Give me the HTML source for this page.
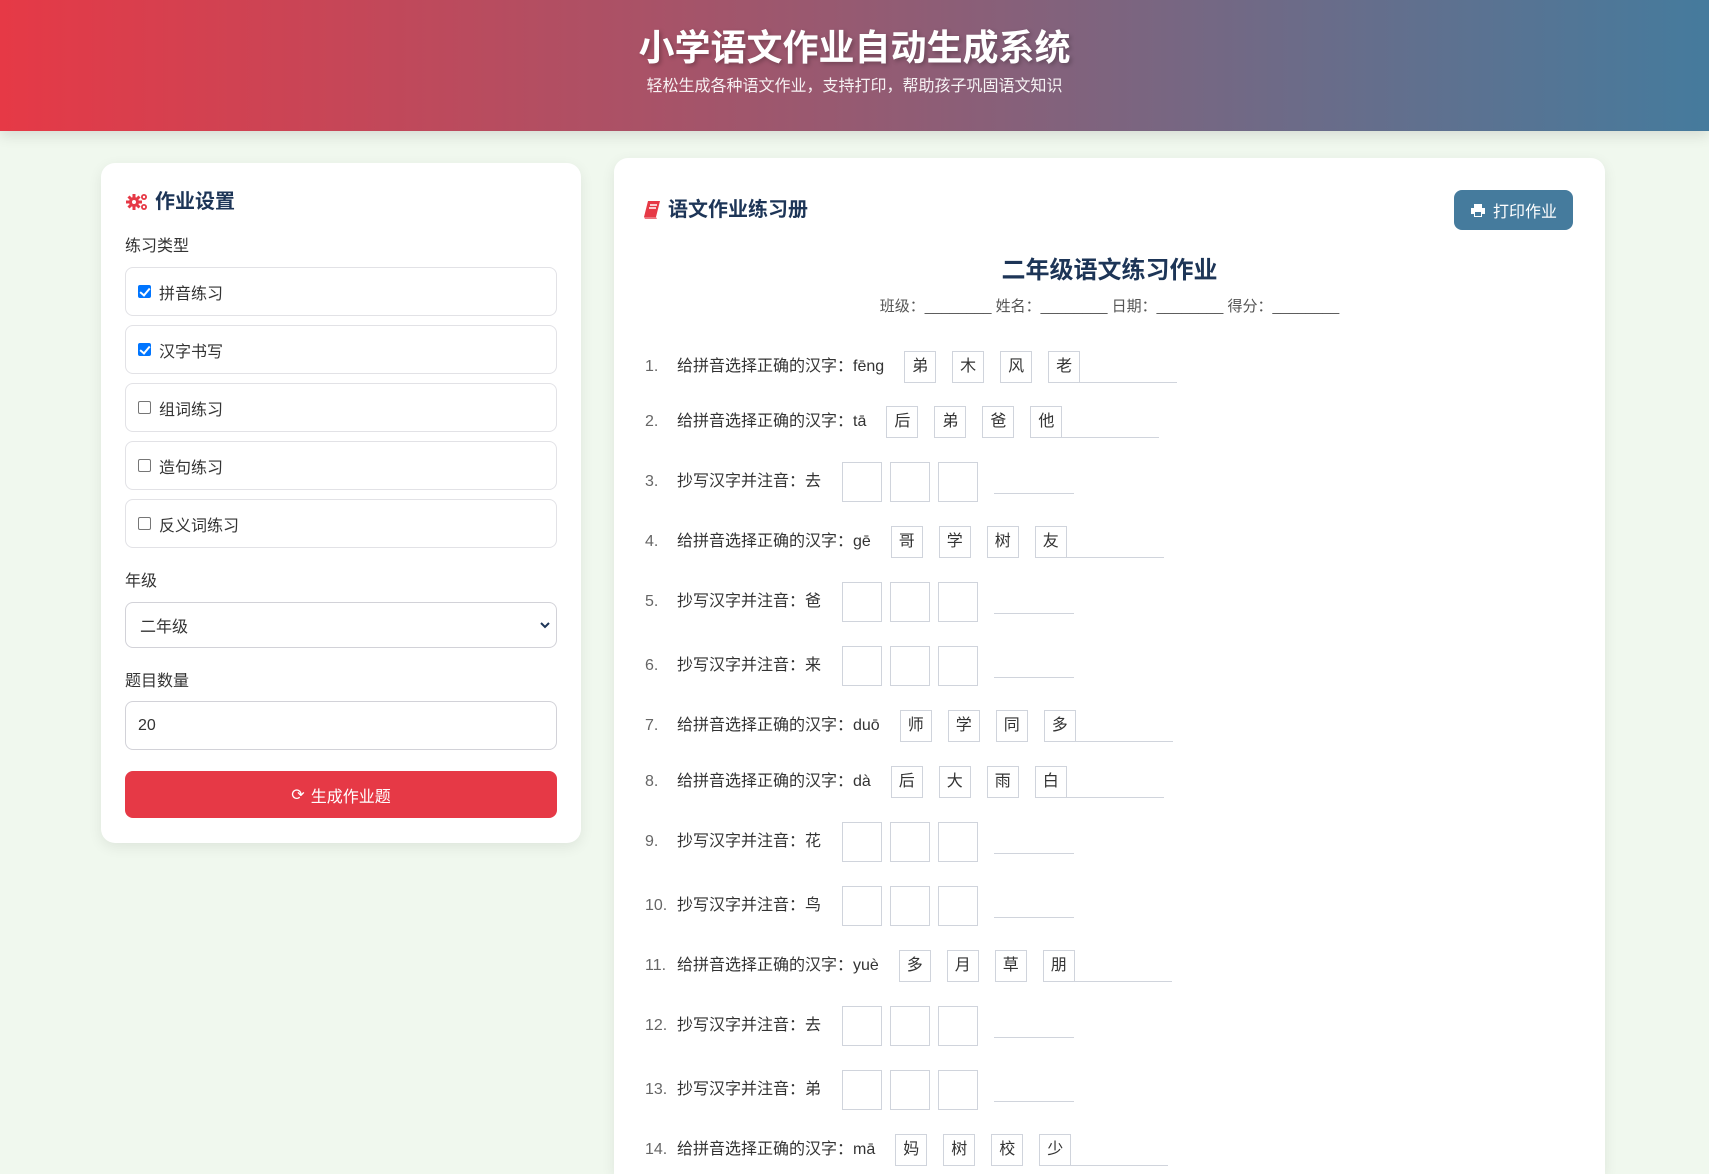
<!DOCTYPE html>
<html><head><meta charset="utf-8">
<style>
*{box-sizing:border-box;margin:0;padding:0}
html{width:1709px;height:1174px;overflow:hidden}
body{width:1709px;height:1174px;overflow:hidden;background:#f0f8ee;font-family:"Liberation Sans","Noto Sans CJK SC",sans-serif;color:#333;position:relative}
.hdr{position:absolute;left:0;top:0;width:1709px;height:131px;background:linear-gradient(90deg,#e63946,#457b9d);box-shadow:0 4px 14px rgba(0,0,0,.12);color:#fff;text-align:center}
.hdr h1{position:absolute;left:0;right:0;top:24px;font-size:36px;line-height:48px;font-weight:bold;text-shadow:2px 2px 4px rgba(0,0,0,.25)}
.hdr p{position:absolute;left:0;right:0;top:77px;font-size:16px;line-height:20px;opacity:.92}
.card{position:absolute;background:#fff;border-radius:14px;box-shadow:0 4px 14px rgba(0,0,0,.08)}
.ttl{position:absolute;font-size:20px;font-weight:bold;color:#1d3557;line-height:26px;display:flex;align-items:center}
.lbl{position:absolute;left:24px;font-size:16px;color:#333;line-height:20px}
.chk{position:absolute;left:24px;width:432px;height:49px;border:1px solid #e2e2e6;border-radius:8px;display:flex;align-items:center;padding-left:12px;font-size:16px}
.cb{width:13px;height:13px;border:1px solid #767676;border-radius:2px;margin-right:8px;display:inline-block;position:relative}
.cb.on{background:#0075ff;border-color:#0075ff}
.cb.on:after{content:"";position:absolute;left:3px;top:0px;width:4px;height:8px;border:solid #fff;border-width:0 2px 2px 0;transform:rotate(40deg)}
.fld{position:absolute;left:24px;width:432px;border:1px solid #d2d2d8;border-radius:8px;font-size:16px;display:flex;align-items:center;padding-left:14px}
.btn{position:absolute;left:24px;width:432px;height:47px;background:#e63946;border-radius:8px;color:#fff;font-size:16px;display:flex;align-items:center;justify-content:center}
.pbtn{position:absolute;left:840px;top:32px;width:119px;height:40px;background:#457b9d;border-radius:8px;color:#fff;font-size:16px;display:flex;align-items:center;justify-content:center}
.row{position:absolute;left:31px;display:flex;align-items:center;font-size:16px;color:#333;line-height:20px}
.num{display:inline-block;width:32px;color:#666}
.q{white-space:nowrap}
.ch{width:32px;height:32px;border:1px solid #d0d4dc;display:flex;align-items:center;justify-content:center;margin-right:16px;font-size:16px}
.ch.last{margin-right:0}
.ul{width:97px;height:32px;border-bottom:1px solid #d0d4dc}
.wb{width:40px;height:40px;border:1px solid #d0d4dc;margin-right:8px}
.ul2{width:80px;height:32px;border-bottom:1px solid #d0d4dc;align-self:flex-start;margin-left:8px}
</style></head><body>
<div class="hdr"><h1>小学语文作业自动生成系统</h1><p>轻松生成各种语文作业，支持打印，帮助孩子巩固语文知识</p></div>

<div class="card" style="left:101px;top:163px;width:480px;height:680px">
 <div class="ttl" style="left:24px;top:26px"><svg width="24" height="22" viewBox="0 0 24 22" style="margin-right:6px"><g fill="#e63946"><circle cx="9" cy="11" r="5"/><g stroke="#e63946" stroke-width="3"><path d="M9 3v16M1 11h16M3.5 5.5l11 11M14.5 5.5l-11 11"/></g><circle cx="9" cy="11" r="2" fill="#fff"/><circle cx="19" cy="6" r="3"/><circle cx="19" cy="16" r="3"/></g><circle cx="19" cy="6" r="1.2" fill="#fff"/><circle cx="19" cy="16" r="1.2" fill="#fff"/></svg>作业设置</div>
 <div class="lbl" style="top:74px">练习类型</div>
 <div class="chk" style="top:104px"><span class="cb on"></span>拼音练习</div>
 <div class="chk" style="top:162px"><span class="cb on"></span>汉字书写</div>
 <div class="chk" style="top:220px"><span class="cb"></span>组词练习</div>
 <div class="chk" style="top:278px"><span class="cb"></span>造句练习</div>
 <div class="chk" style="top:336px"><span class="cb"></span>反义词练习</div>
 <div class="lbl" style="top:409px">年级</div>
 <div class="fld" style="top:439px;height:46px">二年级<svg style="position:absolute;right:6px;top:18px" width="10" height="8" viewBox="0 0 10 8"><path d="M1 2l4 4 4-4" stroke="#1d3557" stroke-width="2" fill="none"/></svg></div>
 <div class="lbl" style="top:509px">题目数量</div>
 <div class="fld" style="top:538px;height:49px;padding-left:12px">20</div>
 <div class="btn" style="top:608px"><span style="font-size:16px;margin-right:6px">⟳</span>生成作业题</div>
</div>

<div class="card" style="left:614px;top:158px;width:991px;height:1016px;border-radius:14px 14px 0 0">
 <div class="ttl" style="left:29px;top:39px"><svg width="18" height="20" viewBox="0 0 18 20" style="margin-right:7px"><path d="M5 1h12l-4 16H1z" fill="#e63946"/><path d="M1 17h12l1 2H2z" fill="#e63946" opacity=".7"/><path d="M7 5h7M6 8h7" stroke="#fff" stroke-width="1.5"/></svg>语文作业练习册</div>
 <div class="pbtn"><svg width="16" height="15" viewBox="0 0 16 15" style="margin-right:7px"><path d="M4 1h8v4H4z M1 5h14v6h-3v3H4v-3H1z" fill="#fff"/><path d="M5 9h6v4H5z" fill="#457b9d"/></svg>打印作业</div>
 <div style="position:absolute;left:0;right:0;top:96px;text-align:center;font-size:24px;font-weight:bold;color:#1d3557;line-height:34px">二年级语文练习作业</div>
 <div style="position:absolute;left:0;right:0;top:139px;text-align:center;font-size:15px;color:#555;line-height:20px">班级：________ 姓名：________ 日期：________ 得分：________</div>

 <div class="row" style="top:193px"><span class="q"><span class="num">1.</span>给拼音选择正确的汉字：fēng</span><span style="width:20px"></span><span class="ch">弟</span><span class="ch">木</span><span class="ch">风</span><span class="ch last">老</span><span class="ul"></span></div>
 <div class="row" style="top:248px"><span class="q"><span class="num">2.</span>给拼音选择正确的汉字：tā</span><span style="width:20px"></span><span class="ch">后</span><span class="ch">弟</span><span class="ch">爸</span><span class="ch last">他</span><span class="ul"></span></div>
 <div class="row" style="top:304px"><span class="q"><span class="num">3.</span>抄写汉字并注音：去</span><span style="width:21px"></span><span class="wb"></span><span class="wb"></span><span class="wb"></span><span class="ul2"></span></div>
 <div class="row" style="top:368px"><span class="q"><span class="num">4.</span>给拼音选择正确的汉字：gē</span><span style="width:20px"></span><span class="ch">哥</span><span class="ch">学</span><span class="ch">树</span><span class="ch last">友</span><span class="ul"></span></div>
 <div class="row" style="top:424px"><span class="q"><span class="num">5.</span>抄写汉字并注音：爸</span><span style="width:21px"></span><span class="wb"></span><span class="wb"></span><span class="wb"></span><span class="ul2"></span></div>
 <div class="row" style="top:488px"><span class="q"><span class="num">6.</span>抄写汉字并注音：来</span><span style="width:21px"></span><span class="wb"></span><span class="wb"></span><span class="wb"></span><span class="ul2"></span></div>
 <div class="row" style="top:552px"><span class="q"><span class="num">7.</span>给拼音选择正确的汉字：duō</span><span style="width:20px"></span><span class="ch">师</span><span class="ch">学</span><span class="ch">同</span><span class="ch last">多</span><span class="ul"></span></div>
 <div class="row" style="top:608px"><span class="q"><span class="num">8.</span>给拼音选择正确的汉字：dà</span><span style="width:20px"></span><span class="ch">后</span><span class="ch">大</span><span class="ch">雨</span><span class="ch last">白</span><span class="ul"></span></div>
 <div class="row" style="top:664px"><span class="q"><span class="num">9.</span>抄写汉字并注音：花</span><span style="width:21px"></span><span class="wb"></span><span class="wb"></span><span class="wb"></span><span class="ul2"></span></div>
 <div class="row" style="top:728px"><span class="q"><span class="num">10.</span>抄写汉字并注音：鸟</span><span style="width:21px"></span><span class="wb"></span><span class="wb"></span><span class="wb"></span><span class="ul2"></span></div>
 <div class="row" style="top:792px"><span class="q"><span class="num">11.</span>给拼音选择正确的汉字：yuè</span><span style="width:20px"></span><span class="ch">多</span><span class="ch">月</span><span class="ch">草</span><span class="ch last">朋</span><span class="ul"></span></div>
 <div class="row" style="top:848px"><span class="q"><span class="num">12.</span>抄写汉字并注音：去</span><span style="width:21px"></span><span class="wb"></span><span class="wb"></span><span class="wb"></span><span class="ul2"></span></div>
 <div class="row" style="top:912px"><span class="q"><span class="num">13.</span>抄写汉字并注音：弟</span><span style="width:21px"></span><span class="wb"></span><span class="wb"></span><span class="wb"></span><span class="ul2"></span></div>
 <div class="row" style="top:976px"><span class="q"><span class="num">14.</span>给拼音选择正确的汉字：mā</span><span style="width:20px"></span><span class="ch">妈</span><span class="ch">树</span><span class="ch">校</span><span class="ch last">少</span><span class="ul"></span></div>
</div>
</body></html>
